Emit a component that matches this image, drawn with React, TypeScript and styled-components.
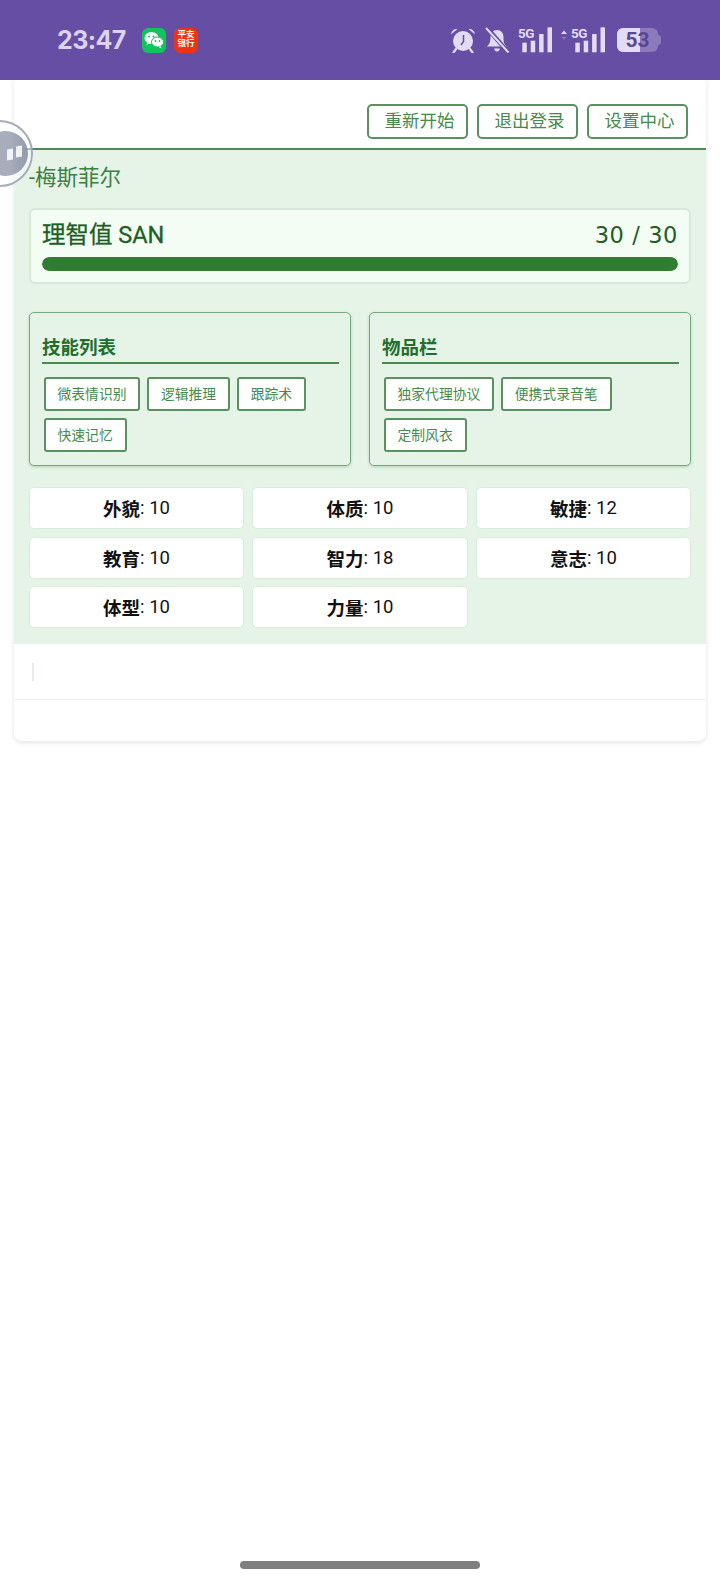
import React from 'react';
import styled, { createGlobalStyle } from 'styled-components';

const GlobalStyle = createGlobalStyle`
    html, body {
        margin: 0;
        padding: 0;
        background: #fff;
        font-family: Roboto, "Noto Sans CJK SC", sans-serif;
    }
    * { box-sizing: border-box; }
`;

const Page = styled.div`
    position: relative;
    width: 720px;
    height: 1583px;
    overflow: hidden;
    background: #fff;
`;

const StatusBar = styled.div`
    position: relative;
    z-index: 1;
    height: 80px;
    background: #654ea3;
    display: flex;
    align-items: center;
    padding: 0 59px 0 57px;
    color: #e2dbf3;
`;

const Time = styled.div`
    font-family: Inter, sans-serif;
    font-size: 25px;
    font-weight: 700;
    letter-spacing: -0.6px;
    color: #dcd3f0;
    width: 85px;
`;

const AppIcon = styled.div<{ $bg: string }>`
    width: 24px;
    height: 25px;
    border-radius: 6px;
    background: ${p => p.$bg};
    margin-right: 8px;
    display: flex;
    align-items: center;
    justify-content: center;
`;

const BankMark = styled.div`
    color: #fff;
    font-size: 8.5px;
    line-height: 9px;
    font-weight: 700;
    width: 18px;
    text-align: center;
    margin-top: -2px;
`;

const StatusRight = styled.div`
    margin-left: auto;
    display: flex;
    align-items: center;
    gap: 9px;
`;

const Card = styled.div`
    margin-left: 14px;
    width: 692px;
    background: #fff;
    border-radius: 0 0 8px 8px;
    box-shadow: 0 2px 5px rgba(0, 0, 0, 0.1);
`;

const Toolbar = styled.div`
    height: 70px;
    padding: 24px 18px 0 0;
    display: flex;
    justify-content: flex-end;
    gap: 9px;
    border-bottom: 2px solid #4f8a55;
`;

const ToolButton = styled.div`
    width: 101px;
    height: 35px;
    border: 2px solid #5a9160;
    border-radius: 5px;
    color: #458a4c;
    font-size: 17.5px;
    line-height: 31px;
    text-align: center;
    padding-left: 4px;
`;

const Panel = styled.div`
    background: #e6f4e8;
    height: 494px;
    padding: 14px 15px 0;
`;

const Name = styled.div`
    color: #3c8043;
    font-size: 21.5px;
    line-height: 28px;
`;

const SanBox = styled.div`
    margin-top: 16px;
    height: 76px;
    background: #f3fdf4;
    border: 2px solid #d5e9d7;
    border-radius: 6px;
    padding: 8px 11px 0;
`;

const SanHead = styled.div`
    display: flex;
    justify-content: space-between;
    align-items: center;
    height: 29px;
    color: #1f5e25;
`;

const SanLabel = styled.div`
    font-size: 23.5px;
    font-weight: 400;
    -webkit-text-stroke: 0.3px #1f5e25;
`;

const SanValue = styled.div`
    font-family: "DejaVu Sans", sans-serif;
    font-size: 22.5px;
    letter-spacing: 0.6px;
    margin-top: 4px;
`;

const SanTrack = styled.div`
    margin-top: 10px;
    height: 14px;
    border-radius: 7px;
    background: #cfe5d1;
    overflow: hidden;
`;

const SanFill = styled.div`
    height: 100%;
    background: #2e7d32;
    border-radius: 7px;
`;

const Columns = styled.div`
    margin-top: 28px;
    display: grid;
    grid-template-columns: 1fr 1fr;
    gap: 18px;
`;

const Column = styled.div`
    height: 154px;
    border: 1.5px solid #74a97a;
    border-radius: 5px;
    padding: 21px 11.5px 0 12px;
    box-shadow: 0 1px 3px rgba(46, 125, 50, 0.3);
`;

const ColumnTitle = styled.div`
    height: 30px;
    font-size: 18.5px;
    font-weight: 700;
    line-height: 28px;
    color: #226f2c;
    border-bottom: 2px solid #4a8a50;
`;

const TagList = styled.div`
    margin-top: 13px;
    padding-left: 1.5px;
    display: flex;
    flex-wrap: wrap;
    gap: 7px 6.5px;
`;

const Tag = styled.div`
    height: 34px;
    padding: 0 12px;
    background: #fff;
    border: 2px solid #5a9160;
    border-radius: 3px;
    color: #458a4c;
    font-size: 13.8px;
    line-height: 30px;
`;

const Stats = styled.div`
    margin-top: 21px;
    display: grid;
    grid-template-columns: repeat(3, 1fr);
    grid-auto-rows: 42px;
    column-gap: 8.4px;
    row-gap: 7.6px;
`;

const Stat = styled.div`
    background: #fff;
    border: 1.5px solid #d9ecdb;
    border-radius: 5px;
    color: #111;
    font-size: 18.5px;
    display: flex;
    align-items: center;
    justify-content: center;
    b { font-weight: 700; }
`;

const InputRow = styled.div`
    height: 56px;
    padding: 19px 0 0 18px;
    border-bottom: 1.5px solid #eeeeee;
`;

const Caret = styled.div`
    width: 1.5px;
    height: 18px;
    background: #e6ece7;
`;

const Foot = styled.div`
    height: 41px;
`;

const FloatBall = styled.div`
    position: absolute;
    left: -34px;
    top: 120px;
    width: 67px;
    height: 67px;
    border-radius: 50%;
    border: 2px solid #a4a9b7;
    background: rgba(255, 255, 255, 0.55);
    opacity: 0.95;
    display: flex;
    align-items: center;
    justify-content: flex-end;
    padding-right: 3px;
`;

const BallCore = styled.div`
    width: 45px;
    height: 45px;
    border-radius: 50%;
    background: linear-gradient(90deg, #a3a9b8 60%, #8f96a8);
    display: flex;
    align-items: center;
    justify-content: flex-end;
    gap: 3px;
    padding-right: 6px;
`;

const BallBar = styled.div<{ $lift: number }>`
    width: 6px;
    height: 11px;
    background: #f2f3f6;
    transform: translateY(${p => p.$lift}px) skewY(-10deg);
`;

const HomeBar = styled.div`
    position: absolute;
    left: 240px;
    top: 1561px;
    width: 240px;
    height: 8px;
    border-radius: 4px;
    background: #7f7f7f;
`;

const Battery = styled.div`
    display: flex;
    align-items: center;
    margin-left: 2px;
`;

const BatteryBox = styled.div`
    position: relative;
    width: 41px;
    height: 24px;
    border-radius: 6px;
    background: #8d7abd;
    overflow: hidden;
`;

const BatteryLevel = styled.div`
    width: 56%;
    height: 100%;
    background: #e2dbf3;
`;

const BatteryText = styled.div`
    position: absolute;
    inset: 0;
    text-align: center;
    font-family: Roboto, sans-serif;
    font-size: 21px;
    font-weight: 700;
    line-height: 24px;
    color: #5a4597;
`;

const BatteryNub = styled.div`
    width: 3px;
    height: 10px;
    border-radius: 0 3px 3px 0;
    background: #8d7abd;
`;

const SignalIcon = styled.svg`
    overflow: visible;
`;

const SmallLabel = styled.text`
    font-family: Roboto, sans-serif;
    font-size: 13.5px;
    font-weight: 700;
    letter-spacing: -0.5px;
`;

const WeChat = () => (
    <svg width="20" height="18" viewBox="0 0 20 18">
        <ellipse cx="7.5" cy="7" rx="7" ry="6" fill="#fff" />
        <path d="M3.5 11l-1 3 3.5-2z" fill="#fff" />
        <ellipse cx="13.5" cy="11" rx="6" ry="5" fill="#fff" stroke="#12c35e" strokeWidth="1" />
        <path d="M16.5 15l1 2.5-3-1.5z" fill="#fff" />
        <circle cx="5" cy="5.500" r="1" fill="#12c35e" />
        <circle cx="9.500" cy="5.500" r="1" fill="#12c35e" />
        <circle cx="11.500" cy="10" r="0.9" fill="#12c35e" />
        <circle cx="15.500" cy="10" r="0.9" fill="#12c35e" />
    </svg>
);

const Alarm = () => (
    <svg width="26" height="26" viewBox="0 0 26 26">
        <circle cx="13" cy="14" r="10" fill="#e2dbf3" />
        <path d="M1 7.500C1.500 3.500 4.500 1.500 7.500 2zM25 7.500C24.500 3.500 21.500 1.500 18.500 2z" fill="#e2dbf3" />
        <path d="M6 22l-2.500 3.500M20 22l2.500 3.500" stroke="#e2dbf3" strokeWidth="2.200" strokeLinecap="round" />
        <path d="M13.500 8v6.500l-2.500 3.500" stroke="#654ea3" strokeWidth="1.500" fill="none" />
    </svg>
);

const BellOff = () => (
    <svg width="24" height="26" viewBox="0 0 24 26">
        <path d="M12 3c-4 0-6.500 3-6.500 7 0 5-1 7-3.500 9.500h19.500C19 17 18.500 15 18.500 10c0-4-2.500-7-6.500-7z" fill="#e2dbf3" />
        <path d="M9 21.500h6c-.5 2-1.500 3-3 3s-2.500-1-3-3z" fill="#e2dbf3" />
        <path d="M2 1l21 24" stroke="#654ea3" strokeWidth="4.500" />
        <path d="M1 1l22.500 24.500" stroke="#e2dbf3" strokeWidth="2" />
    </svg>
);

const barHeights = [9.600, 11.600, 18.300, 25];

const Signal = ({ arrow }: { arrow?: boolean }) => {
    const x = arrow ? 10 : 0;
    const w = arrow ? 45 : 34;
    return (
        <SignalIcon width={w} height="26" viewBox={`0 0 ${w} 26`}>
            {arrow && <path d="M0 7l3-3.500 3 3.500z" fill="#e2dbf3" />}
            {arrow && <path d="M0.500 10l2.500 2.500 2.500-2.500z" fill="#8d7abd" />}
            <SmallLabel x={x} y="11" fill="#e2dbf3">5G</SmallLabel>
            {barHeights.map((h, i) => (
                <rect key={i} x={x + 4.300 + i * 8.400} y={25.300 - h} width="4.500" height={h} fill="#e2dbf3" />
            ))}
        </SignalIcon>
    );
};

const skills = ['微表情识别', '逻辑推理', '跟踪术', '快速记忆'];
const items = ['独家代理协议', '便携式录音笔', '定制风衣'];
const stats = [
    ['外貌', 10], ['体质', 10], ['敏捷', 12],
    ['教育', 10], ['智力', 18], ['意志', 10],
    ['体型', 10], ['力量', 10],
] as const;

function App() {
    return (
        <Page>
            <GlobalStyle />
            <StatusBar>
                <Time>23:47</Time>
                <AppIcon $bg="#12c35e"><WeChat /></AppIcon>
                <AppIcon $bg="#ee3314"><BankMark>平安银行</BankMark></AppIcon>
                <StatusRight>
                    <Alarm />
                    <BellOff />
                    <Signal />
                    <Signal arrow />
                    <Battery>
                        <BatteryBox>
                            <BatteryLevel />
                            <BatteryText>53</BatteryText>
                        </BatteryBox>
                        <BatteryNub />
                    </Battery>
                </StatusRight>
            </StatusBar>

            <Card>
                <Toolbar>
                    <ToolButton>重新开始</ToolButton>
                    <ToolButton>退出登录</ToolButton>
                    <ToolButton>设置中心</ToolButton>
                </Toolbar>
                <Panel>
                    <Name>-梅斯菲尔</Name>
                    <SanBox>
                        <SanHead>
                            <SanLabel>理智值 SAN</SanLabel>
                            <SanValue>30 / 30</SanValue>
                        </SanHead>
                        <SanTrack><SanFill style={{ width: `${(30 / 30) * 100}%` }} /></SanTrack>
                    </SanBox>
                    <Columns>
                        <Column>
                            <ColumnTitle>技能列表</ColumnTitle>
                            <TagList>{skills.map(s => <Tag key={s}>{s}</Tag>)}</TagList>
                        </Column>
                        <Column>
                            <ColumnTitle>物品栏</ColumnTitle>
                            <TagList>{items.map(s => <Tag key={s}>{s}</Tag>)}</TagList>
                        </Column>
                    </Columns>
                    <Stats>
                        {stats.map(([k, v]) => <Stat key={k}><b>{k}</b>: {v}</Stat>)}
                    </Stats>
                </Panel>
                <InputRow><Caret /></InputRow>
                <Foot />
            </Card>

            <FloatBall>
                <BallCore>
                    <BallBar $lift={1} />
                    <BallBar $lift={-2} />
                </BallCore>
            </FloatBall>
            <HomeBar />
        </Page>
    );
}

export default App;
